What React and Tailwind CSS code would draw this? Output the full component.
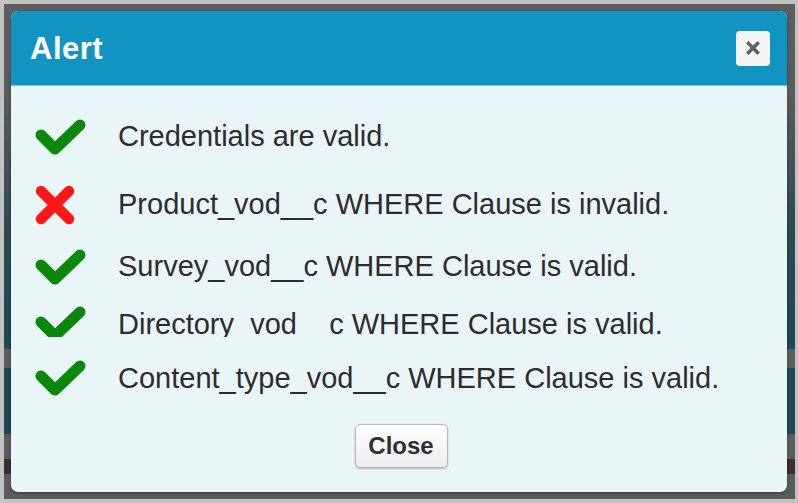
import React from "react";

function Check() {
  return (
    <svg width="52" height="40" viewBox="0 0 52 40">
      <polyline
        points="6,18 20,32 45,8"
        fill="none"
        stroke="#0b870b"
        strokeWidth="11"
        strokeLinecap="round"
        strokeLinejoin="round"
      />
    </svg>
  );
}

function Cross() {
  return (
    <svg width="40" height="40" viewBox="0 0 40 40">
      <g stroke="#ff1717" strokeWidth="10.5" strokeLinecap="round">
        <line x1="6" y1="6" x2="34" y2="34" />
        <line x1="34" y1="6" x2="6" y2="34" />
      </g>
    </svg>
  );
}

function Row({ ok, text, h }) {
  return (
    <div className={`flex items-center ${h}`}>
      <div className="w-[83px] shrink-0 flex items-center">{ok ? <Check /> : <Cross />}</div>
      <span className="text-[29px] leading-none text-[#2c2c2f] whitespace-nowrap">{text}</span>
    </div>
  );
}

export default function App() {
  return (
    <div
      className="w-[798px] h-[503px] bg-[#c2c2c2] p-[4px] pr-[3px] overflow-hidden"
      style={{ fontFamily: '"Liberation Sans", Arial, Helvetica, sans-serif' }}
    >
      <div className="w-full h-[495px] p-[7px] pr-[8px] bg-[linear-gradient(to_bottom,#5e5e5e_0px,#5a5b5c_90px,#2c4851_230px,#1f4853_345px,#5b5e5f_345px,#5b5e5f_364px,#1f4853_364px,#1f4853_430px,#5a5c5c_430px,#5a5c5c_455px,#3a2e2e_455px,#3a2e2e_470px,#5a5c5c_470px)]">
        <div className="w-[776px] h-[481px] rounded-[7px] overflow-hidden bg-[#eaf5f8] flex flex-col shadow-[0_1px_3px_rgba(0,0,0,0.4)]">
          <div className="h-[75px] shrink-0 bg-[#1294c3] border-b border-[#72c1de] flex items-center justify-between pl-[19px] pr-[17px]">
            <span className="text-white font-bold text-[31px] leading-none tracking-[0.5px]">Alert</span>
            <div className="w-[34px] h-[35px] rounded-[4px] bg-[#f4f6f6] flex items-center justify-center">
              <svg width="14" height="14" viewBox="0 0 14 14">
                <g stroke="#5f6263" strokeWidth="3.4" strokeLinecap="square">
                  <line x1="2.5" y1="2.5" x2="11.5" y2="11.5" />
                  <line x1="11.5" y1="2.5" x2="2.5" y2="11.5" />
                </g>
              </svg>
            </div>
          </div>
          <div className="flex flex-col pl-[24px] pt-[16px]">
            <Row ok text="Credentials are valid." h="h-[69px]" />
            <Row ok={false} text="Product_vod__c WHERE Clause is invalid." h="h-[67px]" />
            <Row ok text="Survey_vod__c WHERE Clause is valid." h="h-[57px]" />
            <div className="h-[42px] overflow-hidden">
              <Row ok text="Directory_vod__c WHERE Clause is valid." h="h-[58px]" />
            </div>
            <div className="mt-[12px]">
              <Row ok text="Content_type_vod__c WHERE Clause is valid." h="h-[58px]" />
            </div>
          </div>
          <div className="flex justify-center mt-[17px] pl-[4px]">
            <button className="w-[93px] h-[44px] rounded-[5px] border border-[#b8b8b8] bg-[linear-gradient(to_bottom,#ffffff,#ececec)] shadow-[0_1px_2px_rgba(0,0,0,0.25)] text-[24px] font-bold text-[#2f2f33] leading-none">
              Close
            </button>
          </div>
        </div>
      </div>
    </div>
  );
}
